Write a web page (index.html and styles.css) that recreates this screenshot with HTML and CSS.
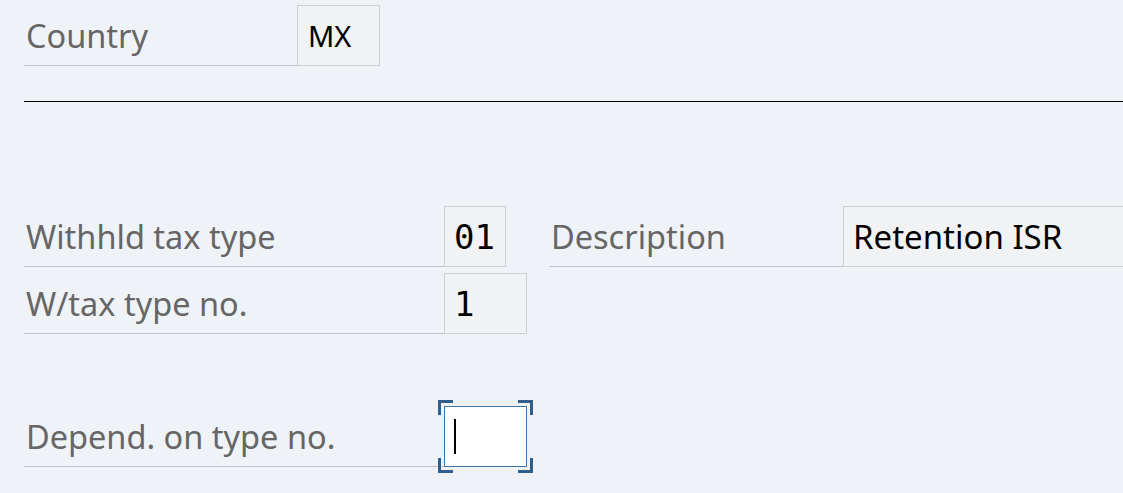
FILE: index.html
```html
<!DOCTYPE html>
<html lang="en">
<head>
	<meta charset="UTF-8">
	<title>Withholding tax type</title>
	<link rel="stylesheet" href="styles.css">
</head>
<body>
	<div class="screen">
		<div class="row first">
			<span class="label w-country">Country</span>
			<span class="field w-mx sans">MX</span>
		</div>
		<hr class="sep">

		<div class="row block">
			<span class="label w-long">Withhld tax type</span>
			<span class="field w-01">01</span>
			<span class="label w-desc gap">Description</span>
			<span class="field w-text sans">Retention ISR</span>
		</div>
		<div class="row tight">
			<span class="label w-long">W/tax type no.</span>
			<span class="field w-num">1</span>
		</div>

		<div class="row last">
			<span class="label w-long">Depend. on type no.</span>
			<span class="field w-num focus">
				<i class="caret"></i>
				<b class="corner tl"></b><b class="corner tr"></b>
				<b class="corner bl"></b><b class="corner br"></b>
			</span>
		</div>
	</div>
</body>
</html>
```

FILE: styles.css
```css
html{
	overflow:hidden;
	background-color:#eff3f7;
}
body{
	margin:0;
	background-color:#eff3f7;
}
.screen{
	padding:0 0 40px 24px;
	font-family:"Noto Sans", "Open Sans", sans-serif;
	font-size:32.5px;
}
.row{
	display:flex;
	height:61px;
	white-space:nowrap;
}
.row > *{flex-shrink:0;}
.first{padding-top:5px;}
.block{margin-top:104px;}
.tight{margin-top:6px;}
.last{margin-top:72px;}

.label{
	display:flex;
	align-items:center;
	padding-left:2px;
	box-sizing:border-box;
	color:#666666;
	border-bottom:1px solid #bfc3c7;
}
.w-country{width:273px;}
.w-long{width:420px;}
.w-desc{width:294px;}
.gap{margin-left:43px;}

.field{
	display:flex;
	align-items:center;
	box-sizing:border-box;
	padding-left:9px;
	background-color:#f1f2f4;
	border:1px solid #ccced1;
	color:#000;
	font-family:"DejaVu Sans Mono", "Liberation Mono", monospace;
	font-size:34px;
}
.w-mx{width:83px;}
.w-01{width:62px;}
.w-num{width:83px;}
.w-text{width:320px;}
.sans{font-family:"Noto Sans", "Open Sans", sans-serif;font-size:33px;}
.w-mx.sans{font-size:29px;padding-left:10px;}

.sep{
	margin:35px 0 0 0;
	border:0;
	border-top:1px solid #000;
	height:0;
}

.focus{
	position:relative;
	background-color:#fff;
	border:1px solid #3a76a8;
}
.corner{
	position:absolute;
	display:block;
	box-sizing:border-box;
	width:15px;
	height:15px;
	border:0 solid #2f5f8a;
}
.tl{left:-7px;top:-7px;border-width:3px 0 0 3px;}
.tr{right:-7px;top:-7px;border-width:3px 3px 0 0;}
.bl{left:-7px;bottom:-7px;border-width:0 0 3px 3px;}
.br{right:-7px;bottom:-7px;border-width:0 3px 3px 0;}
.caret{
	display:block;
	width:2px;
	height:35px;
	background:#000;
}
```
